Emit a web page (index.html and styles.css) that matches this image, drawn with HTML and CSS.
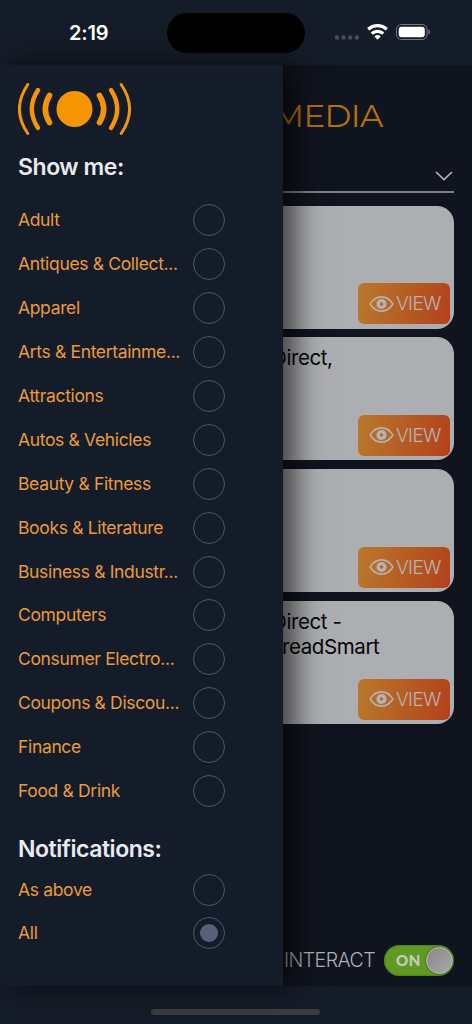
FILE: index.html
```html
<!DOCTYPE html>
<html lang="en">
<head>
<meta charset="utf-8">
<meta name="viewport" content="width=device-width, initial-scale=1">
<title>Media</title>
<link rel="stylesheet" href="styles.css">
</head>
<body>
<svg class="defs" width="0" height="0" aria-hidden="true">
  <symbol id="eye" viewBox="0 0 26 18">
    <path d="M1.2 9C4 4.4 8 1.6 13 1.6S22 4.4 24.8 9C22 13.6 18 16.4 13 16.4S4 13.6 1.2 9Z" fill="none" stroke="currentColor" stroke-width="1.6"/>
    <circle cx="13" cy="9" r="3.600" fill="none" stroke="currentColor" stroke-width="3.400"/>
  </symbol>
</svg>
<div class="phone">
  <header class="status">
    <time class="clock">2:19</time>
    <div class="island"></div>
    <div class="signals">
      <svg width="100" height="24" viewBox="0 0 100 24">
        <g fill="#474c58"><circle cx="6" cy="17.5" r="2.2"/><circle cx="12.6" cy="17.5" r="2.2"/><circle cx="19.2" cy="17.5" r="2.2"/><circle cx="25.8" cy="17.5" r="2.2"/></g>
        <g fill="none" stroke="#fff" stroke-width="3.200"><path d="M37.2 9.2a14 14 0 0 1 18.6 0"/><path d="M40.7 13.500a8.7 8.7 0 0 1 11.6 0"/></g>
        <path d="M43.3 16.500a4.9 4.9 0 0 1 6.4 0L46.5 19.700Z" fill="#fff"/>
        <rect x="65.5" y="4.5" width="30.5" height="15" rx="4.8" fill="none" stroke="#747883"/>
        <rect x="67.7" y="6.7" width="26.1" height="10.6" rx="3" fill="#fff"/>
        <path d="M97.5 9.5c2 .5 2 4.500 0 5Z" fill="#747883"/>
      </svg>
    </div>
  </header>
  <main class="main">
    <section class="page">
      <h1 class="brand">MEDIA</h1>
      <div class="select">
        <svg width="18" height="10" viewBox="0 0 18 10"><path d="M1 1l8 7.700 8-7.700" fill="none" stroke="#b3b5b9" stroke-width="1.600"/></svg>
      </div>
      <div class="cards">
        <article class="card"><p class="title"></p><button class="view"><svg class="eye"><use href="#eye"/></svg><span>VIEW</span></button></article>
        <article class="card"><p class="title">Direct,</p><button class="view"><svg class="eye"><use href="#eye"/></svg><span>VIEW</span></button></article>
        <article class="card"><p class="title"></p><button class="view"><svg class="eye"><use href="#eye"/></svg><span>VIEW</span></button></article>
        <article class="card"><p class="title">Direct -<br><span class="word">readSmart</span></p><button class="view"><svg class="eye"><use href="#eye"/></svg><span>VIEW</span></button></article>
      </div>
      <div class="interact">
        <span class="interact-label">INTERACT</span>
        <div class="switch"><span>ON</span><i class="knob"></i></div>
      </div>
    </section>
    <aside class="drawer">
      <svg class="logo" width="114" height="54" viewBox="0 0 114 54">
        <circle cx="56.500" cy="27" r="18" fill="#f59504"/>
        <g fill="none" stroke="#f59504" stroke-linecap="round">
          <path d="M31.500 13.500q-8.400 13.500 0 27M81.500 13.500q8.400 13.500 0 27" stroke-width="5.600"/>
          <path d="M20 8q-12.400 19 0 38M93 8q12.400 19 0 38" stroke-width="4.400"/>
          <path d="M9.800 2.500q-16.800 24.500 0 49M103.200 2.500q16.800 24.500 0 49" stroke-width="3"/>
        </g>
      </svg>
      <h2 class="heading show">Show me:</h2>
      <ul class="list">
        <li><span>Adult</span><i class="radio"></i></li>
        <li><span>Antiques &amp; Collect...</span><i class="radio"></i></li>
        <li><span>Apparel</span><i class="radio"></i></li>
        <li><span>Arts &amp; Entertainme...</span><i class="radio"></i></li>
        <li><span>Attractions</span><i class="radio"></i></li>
        <li><span>Autos &amp; Vehicles</span><i class="radio"></i></li>
        <li><span>Beauty &amp; Fitness</span><i class="radio"></i></li>
        <li><span>Books &amp; Literature</span><i class="radio"></i></li>
        <li><span>Business &amp; Industr...</span><i class="radio"></i></li>
        <li><span>Computers</span><i class="radio"></i></li>
        <li><span>Consumer Electro...</span><i class="radio"></i></li>
        <li><span>Coupons &amp; Discou...</span><i class="radio"></i></li>
        <li><span>Finance</span><i class="radio"></i></li>
        <li><span>Food &amp; Drink</span><i class="radio"></i></li>
      </ul>
      <h2 class="heading notify">Notifications:</h2>
      <ul class="list">
        <li><span>As above</span><i class="radio"></i></li>
        <li><span>All</span><i class="radio checked"></i></li>
      </ul>
    </aside>
  </main>
  <footer class="home"><div class="bar"></div></footer>
</div>
</body>
</html>
```
FILE: styles.css
```css
* { box-sizing: border-box; margin: 0; padding: 0; }
body { background: #151c29; font-family: Inter, "Liberation Sans", sans-serif; }
.defs { position: absolute; }
.phone { display: flex; flex-direction: column; width: 472px; height: 1024px; overflow: hidden; background: #151c29; }
.status { height: 65px; display: grid; grid-template-columns: 167px 138px 1fr; align-items: start; }
.clock { padding: 20px 0 0 69px; font-size: 20px; line-height: 26px; font-weight: 600; letter-spacing: -.2px; color: #fff; }
.island { margin-top: 13px; height: 40px; border-radius: 20px; background: #000; }
.signals { padding: 20px 0 0 26px; }
.signals svg, .logo, .select svg { display: block; }
.main { position: relative; height: 921px; }
.page { display: flex; flex-direction: column; height: 921px; padding: 0 18px; background: #10141e; }
.brand { height: 93px; padding: 31px 0 0 255px; font-family: Montserrat, Lato, sans-serif; font-size: 32.500px; line-height: 40px; font-weight: 400; letter-spacing: -.6px; color: #b77106; }
.select { height: 35px; display: flex; justify-content: flex-end; align-items: flex-start; padding: 13px 1px 0 0; border-bottom: 2px solid #7d828a; }
.cards { display: grid; gap: 8.800px; margin-top: 12.700px; }
.card { display: flex; flex-direction: column; justify-content: space-between; height: 123px; padding: 8px 4px 4.500px 254px; border-radius: 17px; background: #adaeb2; }
.title { font-size: 20.500px; line-height: 25px; letter-spacing: -.4px; color: #050506; white-space: nowrap; }
.word { padding-left: 10px; }
.view { align-self: flex-end; display: flex; align-items: center; width: 92px; height: 41px; padding-left: 11px; gap: 2px; border: 0; border-radius: 6px; background: linear-gradient(100deg, #b9792b, #b3411c); color: #b5b3b3; font: 300 19px/24px Inter, sans-serif; letter-spacing: -.7px; }
.view span { padding-top: 1px; }
.eye { width: 25px; height: 18px; flex: none; }
.interact { display: flex; align-items: center; justify-content: flex-end; gap: 9px; margin: auto 0 10.500px; color: #b1b3b7; }
.interact-label { font-size: 19.500px; line-height: 28px; font-weight: 300; letter-spacing: -.55px; }
.switch { display: flex; align-items: center; justify-content: space-between; width: 70px; height: 31px; padding: 1px 1px 1px 12px; border-radius: 16px; background: #619a23; box-shadow: inset 0 0 2px #36580f; color: #c5cdc0; font-family: Lato, sans-serif; font-weight: 900; font-size: 15px; letter-spacing: .7px; }
.knob { width: 27px; height: 27px; border-radius: 50%; background: linear-gradient(135deg, #868686, #aaa); border: 1px solid #b7b7b7; box-shadow: 0 0 2px #303030; }
.drawer { position: absolute; left: 0; top: 0; width: 283px; height: 921px; padding: 17px 18px 0; background: #151c29; box-shadow: 12px 0 28px rgba(0,0,0,.65); }
.heading { font-size: 23px; line-height: 30px; font-weight: 600; letter-spacing: -.45px; color: #e9eaf0; }
.show { margin-top: 16px; margin-bottom: 16.500px; }
.notify { margin-top: 21.500px; margin-bottom: 3.200px; }
.list { list-style: none; }
.list li { display: flex; align-items: center; justify-content: space-between; width: 207px; height: 43.900px; color: #e99a3d; font-size: 17.500px; line-height: 22px; letter-spacing: -.34px; white-space: nowrap; }
.radio { flex: none; display: grid; place-items: center; width: 32px; height: 32px; border: 1px solid #4b566e; border-radius: 50%; }
.checked::after { content: ""; width: 18px; height: 18px; border-radius: 50%; background: #56607a; }
.home { height: 38px; display: flex; justify-content: center; padding: 23px 1px 0 0; }
.bar { width: 169px; height: 6px; border-radius: 3px; background: #3a3c40; }
```
